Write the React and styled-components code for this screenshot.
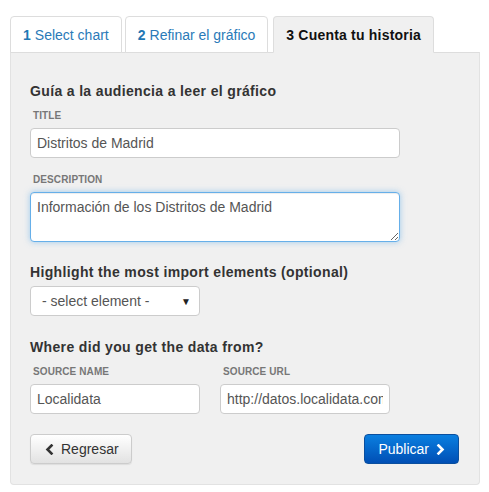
import React from 'react'
import styled, { createGlobalStyle } from 'styled-components'

const GlobalStyle = createGlobalStyle`
  html, body {
    margin: 0;
    padding: 0;
    background: #ffffff;
  }
  body {
    font-family: "Liberation Sans", Arial, sans-serif;
    color: #333333;
  }
`

const Page = styled.div`
  padding: 16px 9px 8px 10px;
  width: 470px;
`

const Tabs = styled.div`
  display: flex;
  gap: 3px;
  align-items: flex-end;
`

const Tab = styled.div`
  height: 37px;
  box-sizing: border-box;
  padding: 0 12px;
  display: flex;
  align-items: center;
  font-size: 14px;
  color: ${p => (p.$active ? '#111111' : '#2a7ab8')};
  font-weight: ${p => (p.$active ? 'bold' : 'normal')};
  letter-spacing: ${p => (p.$active ? '0.2px' : '0')};
  background: ${p => (p.$active ? '#f0f0f0' : '#ffffff')};
  border: 1px solid #dddddd;
  border-bottom: ${p => (p.$active ? '1px solid #f0f0f0' : '1px solid #dddddd')};
  border-radius: 4px 4px 0 0;
  margin-bottom: -1px;
  margin-left: ${p => (p.$active ? '2px' : '0')};
  position: relative;

  b {
    color: ${p => (p.$active ? '#111111' : '#1f78b4')};
    margin-right: 4px;
  }
`

const Panel = styled.div`
  background: #f0f0f0;
  border: 1px solid #e2e2e2;
  border-top: 1px solid #dddddd;
  border-radius: 0 0 4px 4px;
  padding: 28px 20px 20px 19px;
`

const Heading = styled.h3`
  margin: 0 0 ${p => p.$mb || '7px'} 0;
  font-size: 14px;
  line-height: 20px;
  font-weight: bold;
  letter-spacing: 0.35px;
  color: #333333;
`

const Section = styled.div`
  margin-top: ${p => p.$top || '0'};
`

const Label = styled.div`
  font-size: 10px;
  line-height: 15px;
  font-weight: bold;
  letter-spacing: 0.1px;
  color: #777777;
  text-transform: uppercase;
  margin: 0 0 5px 3px;
`

const Field = styled.div`
  margin-bottom: ${p => p.$mb || '0'};
`

const TextInput = styled.input`
  display: block;
  box-sizing: border-box;
  width: ${p => p.$w || '370px'};
  height: 30px;
  padding: 0 6px;
  font-family: "Liberation Sans", Arial, sans-serif;
  font-size: 14px;
  color: #555555;
  background: #ffffff;
  border: 1px solid #cccccc;
  border-radius: 4px;
  outline: none;
`

const TextArea = styled.textarea`
  display: block;
  box-sizing: border-box;
  width: 370px;
  height: 50px;
  padding: 5px 6px;
  font-family: "Liberation Sans", Arial, sans-serif;
  font-size: 14px;
  line-height: 18px;
  color: #555555;
  background: #ffffff;
  border: 1px solid #66afe9;
  border-radius: 4px;
  box-shadow: inset 0 1px 1px rgba(0, 0, 0, 0.075), 0 0 6px rgba(102, 175, 233, 0.6);
  outline: none;
`

const Select = styled.div`
  box-sizing: border-box;
  width: 170px;
  height: 30px;
  padding: 0 8px 0 11px;
  display: flex;
  align-items: center;
  justify-content: space-between;
  font-size: 14px;
  color: #555555;
  background: #ffffff;
  border: 1px solid #cccccc;
  border-radius: 4px;

  span.arrow {
    font-size: 10px;
    color: #222222;
  }
`

const Row = styled.div`
  display: flex;
  gap: 20px;
`

const Actions = styled.div`
  display: flex;
  justify-content: space-between;
  margin-top: 20px;
`

const Button = styled.button`
  height: 30px;
  box-sizing: border-box;
  padding: 0 ${p => (p.$primary ? '13px' : '12px')} 0 ${p => (p.$primary ? '13px' : '14px')};
  display: flex;
  align-items: center;
  gap: 7px;
  font-family: "Liberation Sans", Arial, sans-serif;
  font-size: 14px;
  border-radius: 4px;
  cursor: pointer;
  color: ${p => (p.$primary ? '#ffffff' : '#333333')};
  background: ${p =>
    p.$primary
      ? 'linear-gradient(to bottom, #0a7fe0 0%, #004fb5 100%)'
      : 'linear-gradient(to bottom, #ffffff 0%, #e2e2e2 100%)'};
  border: 1px solid ${p => (p.$primary ? '#0a4f9e' : '#cccccc')};
  box-shadow: ${p => (p.$primary ? 'none' : '0 1px 1px rgba(0,0,0,0.08)')};
`

const Chevron = ({ dir, color }) => (
  <svg width="9" height="11" viewBox="0 0 9 11">
    <path
      d={dir === 'left' ? 'M6.5 1.5 L2.5 5.5 L6.5 9.5' : 'M2.5 1.5 L6.5 5.5 L2.5 9.5'}
      fill="none"
      stroke={color}
      strokeWidth="2.6"
      strokeLinecap="square"
    />
  </svg>
)

const App = () => {
  return (
    <Page>
      <GlobalStyle />
      <Tabs>
        <Tab><b>1</b>Select chart</Tab>
        <Tab><b>2</b>Refinar el gráfico</Tab>
        <Tab $active><b>3</b>Cuenta tu historia</Tab>
      </Tabs>
      <Panel>
        <Section>
          <Heading>Guía a la audiencia a leer el gráfico</Heading>
          <Field $mb="14px">
            <Label>Title</Label>
            <TextInput readOnly defaultValue="Distritos de Madrid" />
          </Field>
          <Field>
            <Label>Description</Label>
            <TextArea readOnly defaultValue="Información de los Distritos de Madrid" />
          </Field>
        </Section>
        <Section $top="20px">
          <Heading $mb="4px">Highlight the most import elements (optional)</Heading>
          <Select>
            <span>- select element -</span>
            <span className="arrow">▼</span>
          </Select>
        </Section>
        <Section $top="21px">
          <Heading>Where did you get the data from?</Heading>
          <Row>
            <Field>
              <Label>Source name</Label>
              <TextInput $w="170px" readOnly defaultValue="Localidata" />
            </Field>
            <Field>
              <Label>Source URL</Label>
              <TextInput $w="170px" readOnly defaultValue="http://datos.localidata.com" />
            </Field>
          </Row>
        </Section>
        <Actions>
          <Button>
            <Chevron dir="left" color="#333333" />
            Regresar
          </Button>
          <Button $primary>
            Publicar
            <Chevron dir="right" color="#ffffff" />
          </Button>
        </Actions>
      </Panel>
    </Page>
  )
}

export default App
